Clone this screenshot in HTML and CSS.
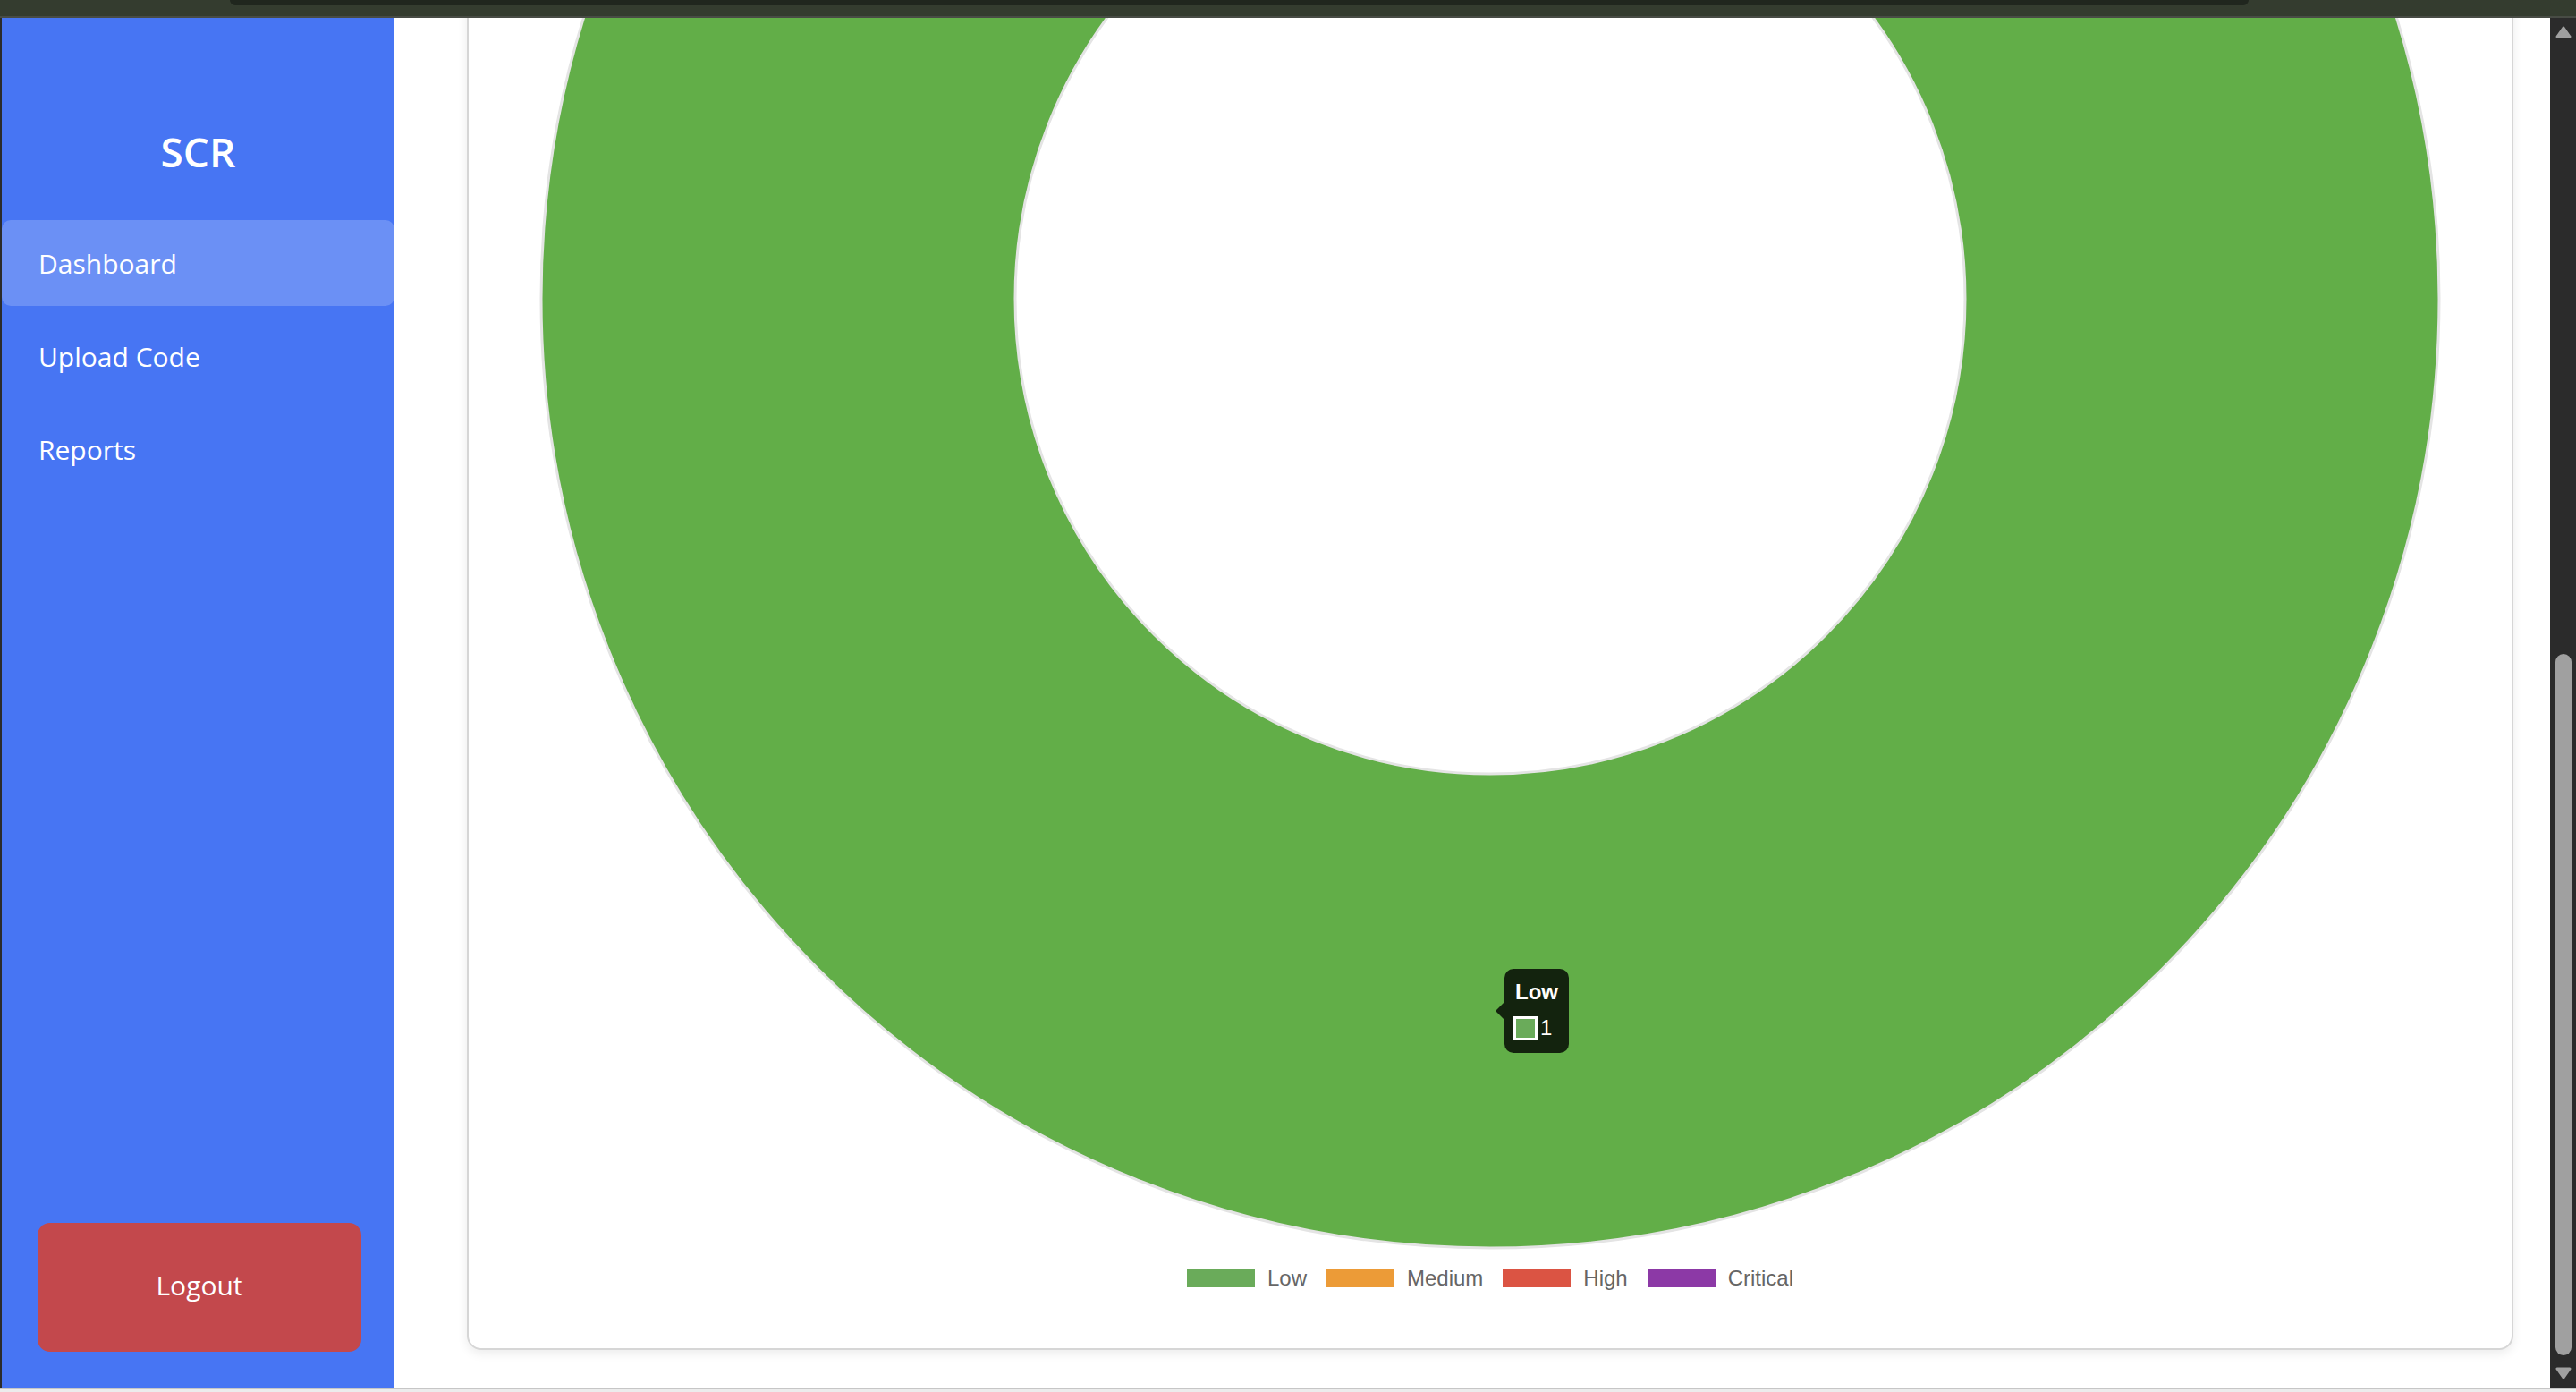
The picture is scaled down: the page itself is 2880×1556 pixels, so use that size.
FILE: index.html
```html
<!DOCTYPE html>
<html lang="en">
<head>
    <meta charset="UTF-8">
    <meta name="viewport" content="width=device-width, initial-scale=1.0">
    <title>SCR Dashboard</title>
    <link rel="stylesheet" href="styles.css">
</head>
<body>
    <div class="window">
        <div class="titlebar"><div class="tab"></div></div>
        <div class="app">
            <aside class="sidebar">
                <h1 class="logo">SCR</h1>
                <nav class="nav">
                    <a href="#" class="nav-item active">Dashboard</a>
                    <a href="#" class="nav-item">Upload Code</a>
                    <a href="#" class="nav-item">Reports</a>
                </nav>
                <button class="logout">Logout</button>
            </aside>
            <main class="main">
                <section class="card">
                    <div class="chart">
                        <svg class="donut" width="100%" height="2124">
                            <circle cx="50%" cy="1062" r="796" fill="none" stroke="#62ae48" stroke-width="530"/>
                            <circle cx="50%" cy="1062" r="1061" fill="none" stroke="#e4e4e4" stroke-width="3"/>
                            <circle cx="50%" cy="1062" r="531" fill="none" stroke="#e4e4e4" stroke-width="3"/>
                        </svg>
                        <div class="tooltip">
                            <div class="tooltip-title">Low</div>
                            <div class="tooltip-body"><span class="tooltip-swatch"></span>1</div>
                        </div>
                    </div>
                    <ul class="legend">
                        <li><span class="legend-box low"></span>Low</li>
                        <li><span class="legend-box medium"></span>Medium</li>
                        <li><span class="legend-box high"></span>High</li>
                        <li><span class="legend-box critical"></span>Critical</li>
                    </ul>
                </section>
            </main>
            <div class="scrollbar">
                <svg class="arrow" width="18" height="14" viewBox="0 0 18 14"><polygon points="9,2 16,12 2,12" fill="#a0a0a0" stroke="#a0a0a0" stroke-width="3" stroke-linejoin="round"/></svg>
                <div class="track"><div class="thumb"></div></div>
                <svg class="arrow down" width="18" height="14" viewBox="0 0 18 14"><polygon points="2,2 16,2 9,12" fill="#a0a0a0" stroke="#a0a0a0" stroke-width="3" stroke-linejoin="round"/></svg>
            </div>
        </div>
        <div class="statusline"></div>
    </div>
</body>
</html>
```

FILE: styles.css
```css
body {
    margin: 0;
    font-family: "Open Sans", "Segoe UI", sans-serif;
    background-color: #ffffff;
    overflow: hidden;
}
.window {
    display: flex;
    flex-direction: column;
    height: 100vh;
}
.titlebar {
    height: 18px;
    background: #343c2f;
    border-bottom: 2px solid #484c45;
    padding-left: 257px;
}
.tab {
    width: 2257px;
    height: 6px;
    background: #20261e;
    border-radius: 0 0 8px 8px;
}
.app {
    flex: 1;
    display: flex;
    min-height: 0;
    border-left: 2px solid #2b2b2b;
}
.sidebar {
    width: 439px;
    background-color: #4775f3;
    display: flex;
    flex-direction: column;
    color: #ffffff;
}
.logo {
    margin: 117px 0 45px;
    text-align: center;
    font-size: 46px;
    font-weight: 600;
    line-height: 64px;
}
.nav {
    display: flex;
    flex-direction: column;
    gap: 8px;
}
.nav-item {
    display: flex;
    align-items: center;
    height: 96px;
    padding-left: 41px;
    color: #ffffff;
    text-decoration: none;
    font-size: 30px;
    border-radius: 10px;
}
.nav-item.active {
    background-color: rgba(255, 255, 255, 0.2);
}
.logout {
    margin: auto 37px 40px 40px;
    height: 144px;
    padding-bottom: 6px;
    border: none;
    border-radius: 14px;
    background-color: #c3484c;
    color: #ffffff;
    font-family: "Open Sans", "Segoe UI", sans-serif;
    font-size: 30px;
    cursor: pointer;
}
.main {
    flex: 1;
    display: flex;
    flex-direction: column;
    justify-content: flex-end;
    overflow: hidden;
    padding: 0 41px 42px 81px;
}
.card {
    flex-shrink: 0;
    border: 2px solid #d6d6d6;
    border-radius: 16px;
    box-shadow: 0 4px 12px rgba(0, 0, 0, 0.08);
    padding: 0 0 64px;
    background: #ffffff;
}
.chart {
    position: relative;
    height: 2124px;
}
.donut {
    display: block;
    overflow: visible;
}
.tooltip {
    position: absolute;
    left: calc(50% + 16px);
    top: 1811px;
    padding: 12px 12px 14px 10px;
    background: rgba(0, 0, 0, 0.8);
    border-radius: 10px;
    color: #ffffff;
    font-family: "Liberation Sans", Arial, sans-serif;
    font-size: 24px;
    line-height: 28px;
}
.tooltip::before {
    content: "";
    position: absolute;
    left: -10px;
    top: 50%;
    margin-top: -10px;
    border-top: 10px solid transparent;
    border-bottom: 10px solid transparent;
    border-right: 10px solid rgba(0, 0, 0, 0.8);
}
.tooltip-title {
    font-weight: bold;
    margin-left: 2px;
    margin-bottom: 12px;
}
.tooltip-body {
    display: flex;
    align-items: center;
    gap: 3px;
}
.tooltip-swatch {
    width: 21px;
    height: 21px;
    border: 3px solid #ffffff;
    background: #6aab5a;
}
.legend {
    list-style: none;
    margin: 19px 0 0;
    padding: 0;
    display: flex;
    justify-content: center;
    gap: 22px;
    font-family: "Liberation Sans", Arial, sans-serif;
    font-size: 24px;
    line-height: 28px;
    color: #666666;
}
.legend li {
    display: flex;
    align-items: center;
    gap: 14px;
}
.legend-box {
    width: 76px;
    height: 20px;
}
.legend-box.low { background: #6aab5a; }
.legend-box.medium { background: #ec9b37; }
.legend-box.high { background: #db5443; }
.legend-box.critical { background: #8c39a6; }
.scrollbar {
    width: 29px;
    background: #2b2b2b;
    display: flex;
    flex-direction: column;
    align-items: center;
    padding: 9px 0 9px;
}
.arrow {
    display: block;
    flex-shrink: 0;
}
.track {
    flex: 1;
    display: flex;
    flex-direction: column;
    justify-content: flex-end;
}
.thumb {
    width: 18px;
    height: 784px;
    border-radius: 9px;
    background: #a0a0a0;
}
.arrow.down {
    margin-top: 13px;
}
.statusline {
    height: 3px;
    border-top: 2px solid #c6c6c6;
    background: #ececec;
}
```
